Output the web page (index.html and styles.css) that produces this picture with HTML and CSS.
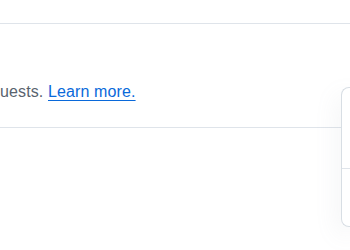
FILE: index.html
```html
<!DOCTYPE html>
<html lang="en">
<head>
    <meta charset="UTF-8">
    <title>Settings</title>
    <link rel="stylesheet" href="styles.css">
</head>
<body>

    <!-- Top bar -->
    <div class="top-bar"></div>

    <!-- Notice row -->
    <div class="notice">
        <p class="notice-text">uests. <a href="#">Learn more.</a></p>
    </div>

    <!-- Dropdown panel, cut by the right edge -->
    <div class="panel">
        <div class="panel-section first"></div>
        <div class="panel-section"></div>
    </div>

</body>
</html>
```

FILE: styles.css
```css
body {
    font-family: "Liberation Sans", Arial, sans-serif;
    background-color: #ffffff;
    margin: 0;
    padding: 0;
    width: 350px;
    height: 250px;
    overflow: hidden;
    position: relative;
}

.top-bar {
    height: 23px;
    border-bottom: 1px solid #dfe4ea;
}

.notice {
    padding: 56px 0 23px 0;
    border-bottom: 1px solid #dfe4ea;
}

.notice-text {
    margin: 0;
    font-size: 16px;
    line-height: 24px;
    letter-spacing: 0.12px;
    color: #59636e;
    white-space: nowrap;
}

.notice-text a {
    color: #0969da;
    text-decoration: underline;
    text-underline-offset: 3px;
}

/* Dropdown panel */
.panel {
    position: absolute;
    top: 87px;
    left: 341px;
    width: 9px;
    height: 140px;
    background-color: #ffffff;
    border: 1px solid #d8dee4;
    border-right: none;
    border-radius: 8px 0 0 8px;
    box-shadow: 0 8px 24px rgba(140, 149, 159, 0.2);
    box-sizing: border-box;
}

.panel-section.first {
    height: 80px;
    border-bottom: 1px solid #dfe4ea;
}
```
